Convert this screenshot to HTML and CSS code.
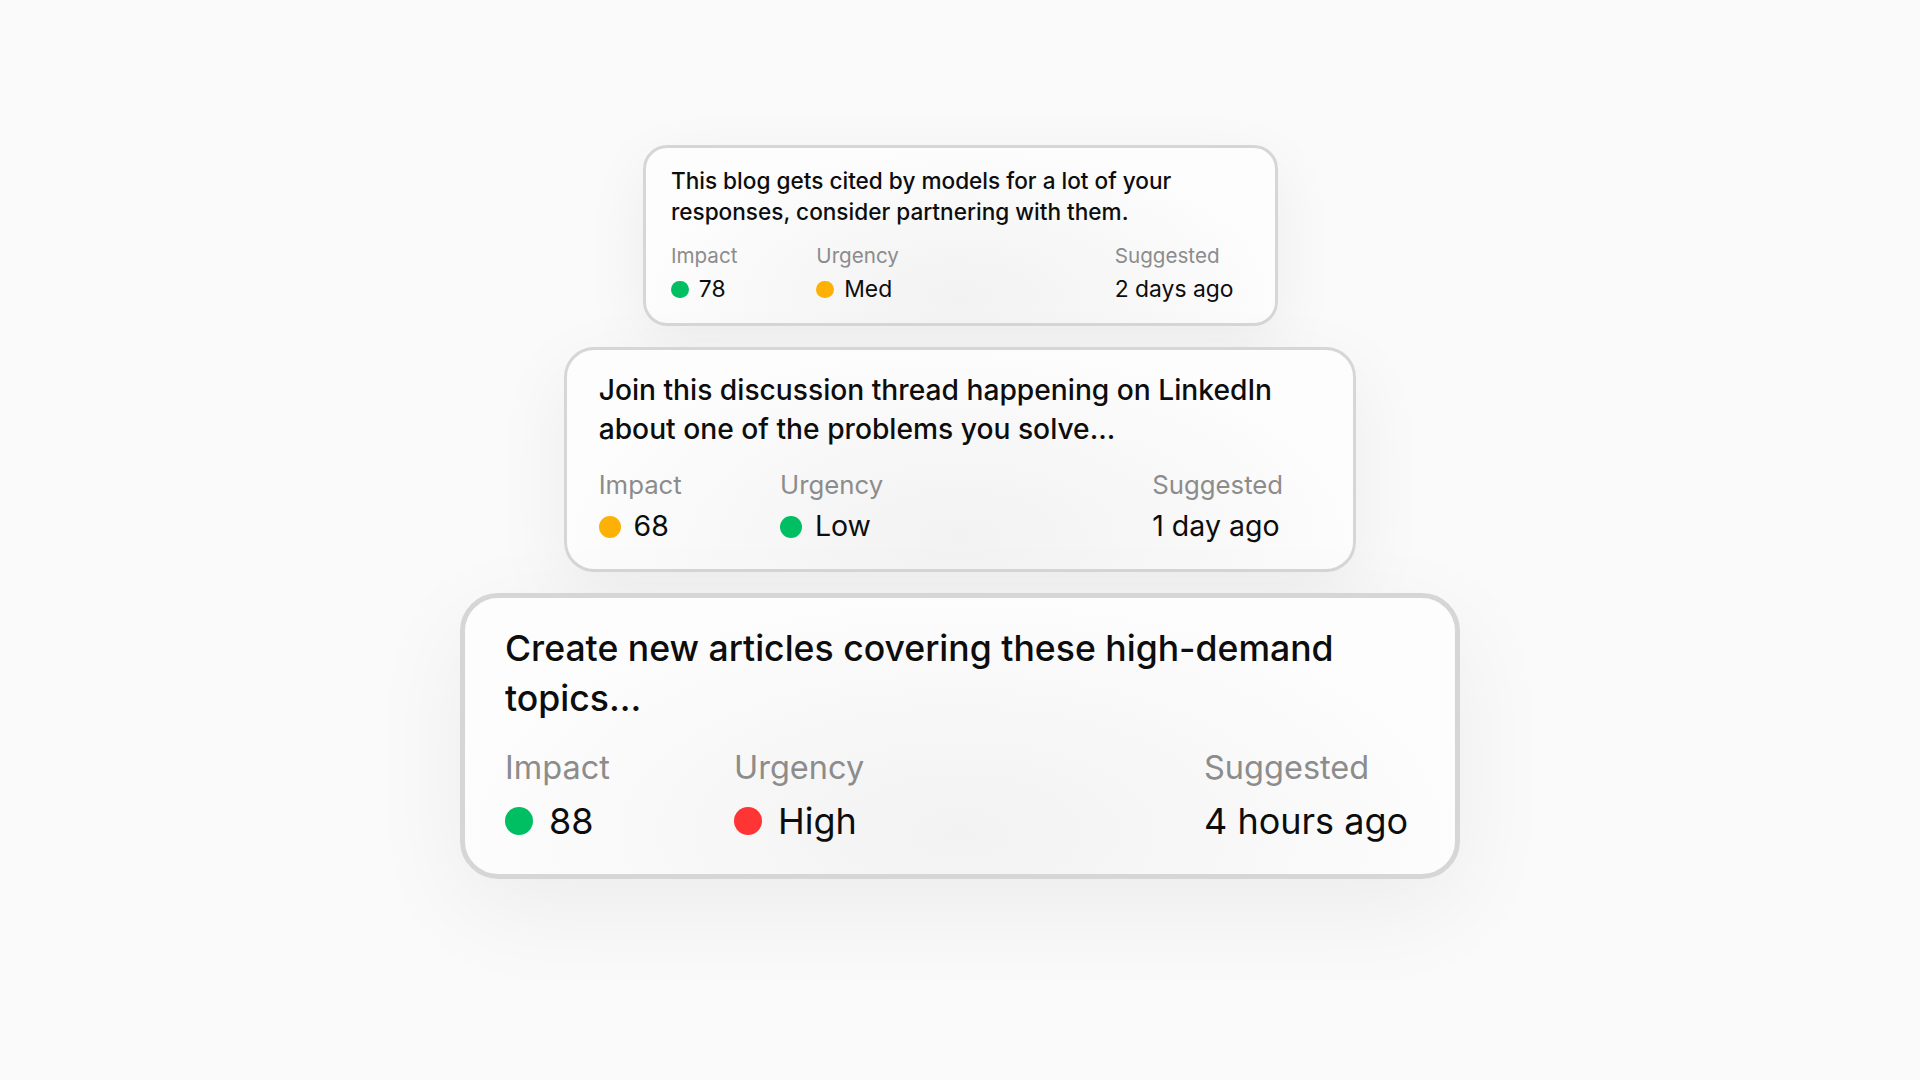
FILE: index.html
```html
<!DOCTYPE html>
<html>
<head>
	<title>Suggestions</title>
	<link rel="stylesheet" href="styles.css">
</head>
<body>
	<div class="stack">

		<div class="card card-sm">
			<p class="title">This blog gets cited by models for a lot of your responses, consider partnering with them.</p>
			<div class="meta">
				<div>
					<div class="label">Impact</div>
					<div class="value"><span class="dot green"></span>78</div>
				</div>
				<div>
					<div class="label">Urgency</div>
					<div class="value"><span class="dot amber"></span>Med</div>
				</div>
				<div>
					<div class="label">Suggested</div>
					<div class="value">2 days ago</div>
				</div>
			</div>
		</div>

		<div class="card card-md">
			<p class="title">Join this discussion thread happening on LinkedIn about one of the problems you solve...</p>
			<div class="meta">
				<div>
					<div class="label">Impact</div>
					<div class="value"><span class="dot amber"></span>68</div>
				</div>
				<div>
					<div class="label">Urgency</div>
					<div class="value"><span class="dot green"></span>Low</div>
				</div>
				<div>
					<div class="label">Suggested</div>
					<div class="value">1 day ago</div>
				</div>
			</div>
		</div>

		<div class="card">
			<p class="title">Create new articles covering these high-demand topics...</p>
			<div class="meta">
				<div>
					<div class="label">Impact</div>
					<div class="value"><span class="dot green"></span>88</div>
				</div>
				<div>
					<div class="label">Urgency</div>
					<div class="value"><span class="dot red"></span>High</div>
				</div>
				<div>
					<div class="label">Suggested</div>
					<div class="value">4 hours ago</div>
				</div>
			</div>
		</div>

	</div>
</body>
</html>
```

FILE: styles.css
```css
html,
body {
  min-height: 100%;
}

body {
  margin: 0;
  background-color: #fafafa;
  font-family: Inter, "Noto Sans", sans-serif;
  color: #0d0d0d;
}

.stack {
  display: flex;
  flex-direction: column;
  align-items: center;
  gap: 21px;
  padding: 145px 0 200px;
}

/* sizes are written for the big card, the others shrink with --u */
.card {
  --u: 1px;
  box-sizing: border-box;
  width: calc(1000 * var(--u));
  padding: calc(26 * var(--u)) calc(40 * var(--u)) calc(31 * var(--u));
  border: calc(5 * var(--u)) solid #d6d6d6;
  border-radius: calc(38 * var(--u));
  background: radial-gradient(ellipse at 50% 85%, #f2f2f2, #fdfdfd 75%);
  box-shadow: 0 calc(30 * var(--u)) calc(100 * var(--u)) rgba(0, 0, 0, 0.06);
}

.card-md {
  --u: 0.792px;
}

.card-sm {
  --u: 0.635px;
}

.title {
  margin: 0;
  font-size: calc(35.6 * var(--u));
  line-height: calc(50 * var(--u));
  font-weight: 500;
}

.meta {
  display: grid;
  grid-template-columns: calc(229 * var(--u)) calc(470 * var(--u)) auto;
  margin-top: calc(24 * var(--u));
}

.label {
  font-size: calc(32.5 * var(--u));
  line-height: calc(40 * var(--u));
  color: #8c8c8c;
}

.value {
  display: flex;
  align-items: center;
  gap: calc(16 * var(--u));
  margin-top: calc(11 * var(--u));
  font-size: calc(36 * var(--u));
  line-height: calc(44 * var(--u));
}

.dot {
  width: calc(28 * var(--u));
  height: calc(28 * var(--u));
  border-radius: 50%;
}

.green {
  background-color: #00bf62;
}

.amber {
  background-color: #fdb106;
}

.red {
  background-color: #ff3434;
}
```
